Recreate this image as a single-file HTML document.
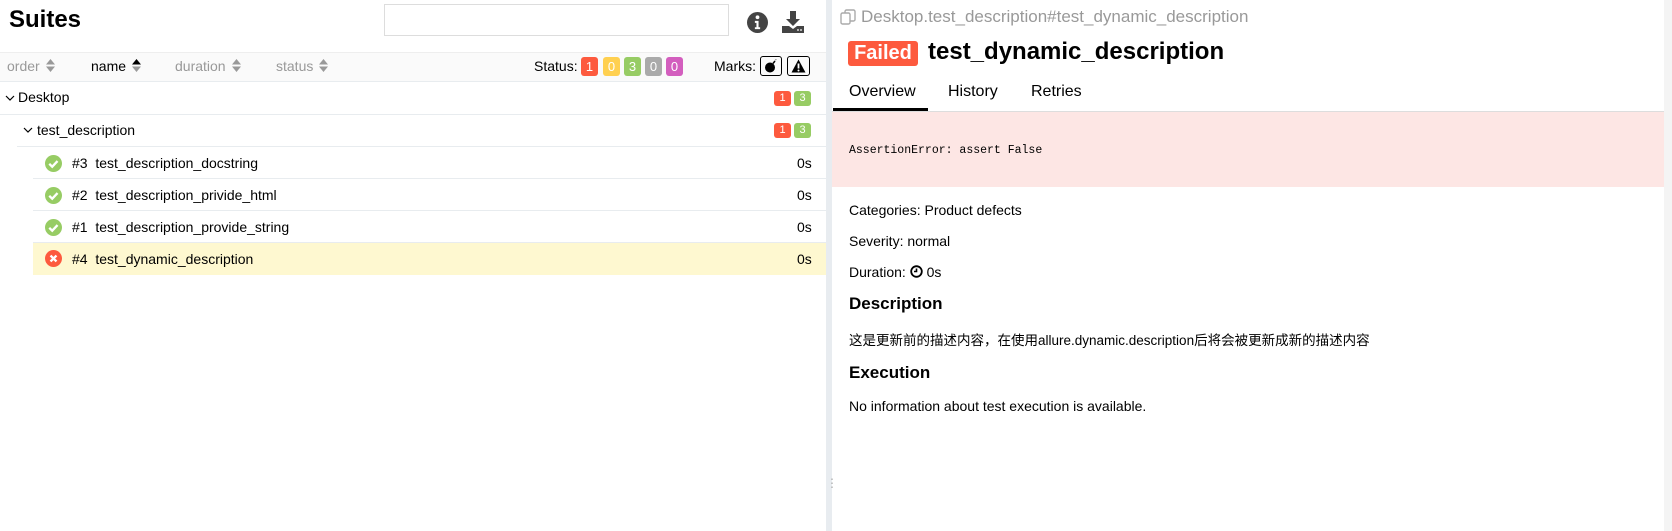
<!DOCTYPE html>
<html><head><meta charset="utf-8"><style>
*{box-sizing:border-box;margin:0;padding:0}
body{width:1672px;height:531px;overflow:hidden;background:#fff;font-family:"Liberation Sans","Noto Sans CJK SC",sans-serif;color:#000;position:relative;font-size:14px}
.a{position:absolute;white-space:nowrap}
.b{position:absolute;color:#fff;text-align:center;border-radius:3px;font-size:13px}
.row{position:absolute;left:0;width:826px;border-bottom:1px solid #e8ecef}
.s{display:inline-block;vertical-align:-1px;margin-left:6px}
</style></head><body>
<div class="a" style="left:9px;top:6px;font-size:24px;font-weight:bold">Suites</div>
<div class="a" style="left:384px;top:4px;width:345px;height:32px;border:1px solid #ddd"></div>
<svg class="a" style="left:747px;top:12px" width="21" height="21" viewBox="0 0 20 20"><circle cx="10" cy="10" r="10" fill="#444"/><circle cx="10" cy="5" r="1.8" fill="#fff"/><path d="M7.5 8.5h3.5v6h1.5v1.8h-5v-1.8h1.5v-4.2h-1.5z" fill="#fff"/></svg>
<svg class="a" style="left:782px;top:11px" width="22" height="22" viewBox="0 0 22 22"><path d="M8 0h6v8h4l-7 7-7-7h4z" fill="#444"/><path d="M0 15h7l4 3 4-3h7v7H0z" fill="#444"/><circle cx="16" cy="19" r=".9" fill="#fff"/><circle cx="19" cy="19" r=".9" fill="#fff"/></svg>
<div class="a" style="left:0;top:52px;width:826px;height:30px;background:#fafafa;border-top:1px solid #eee;border-bottom:1px solid #e8ecef"></div>
<div class="a" style="left:7px;top:58px;color:#999">order<svg class="s" width="9" height="13" viewBox="0 0 9 13"><path d="M0 5.5L4.5 0 9 5.5z" fill="#999"/><path d="M0 7.5L4.5 13 9 7.5z" fill="#999"/></svg></div>
<div class="a" style="left:91px;top:58px">name<svg class="s" width="9" height="13" viewBox="0 0 9 13"><path d="M0 5.5L4.5 0 9 5.5z" fill="#000"/><path d="M0 7.5L4.5 13 9 7.5z" fill="#999"/></svg></div>
<div class="a" style="left:175px;top:58px;color:#999">duration<svg class="s" width="9" height="13" viewBox="0 0 9 13"><path d="M0 5.5L4.5 0 9 5.5z" fill="#999"/><path d="M0 7.5L4.5 13 9 7.5z" fill="#999"/></svg></div>
<div class="a" style="left:276px;top:58px;color:#999">status<svg class="s" width="9" height="13" viewBox="0 0 9 13"><path d="M0 5.5L4.5 0 9 5.5z" fill="#999"/><path d="M0 7.5L4.5 13 9 7.5z" fill="#999"/></svg></div>
<div class="a" style="left:534px;top:58px">Status:</div>
<div class="b" style="left:581px;top:57px;width:17px;height:19px;line-height:19px;background:#fd5a3e">1</div>
<div class="b" style="left:603px;top:57px;width:17px;height:19px;line-height:19px;background:#ffd050">0</div>
<div class="b" style="left:624px;top:57px;width:17px;height:19px;line-height:19px;background:#97cc64">3</div>
<div class="b" style="left:645px;top:57px;width:17px;height:19px;line-height:19px;background:#aaa">0</div>
<div class="b" style="left:666px;top:57px;width:17px;height:19px;line-height:19px;background:#d35ebe">0</div>
<div class="a" style="left:714px;top:58px">Marks:</div>
<div class="a" style="left:760px;top:56px;width:22px;height:20px;border:1.5px solid #000;border-radius:3px"><svg style="position:absolute;left:3px;top:2px" width="14" height="14" viewBox="0 0 14 14"><circle cx="6" cy="8.5" r="5" fill="#000"/><path d="M9 4.5l2-2.5" stroke="#000" stroke-width="1.5"/><path d="M11 1l1.5-.5" stroke="#888" stroke-width="1"/></svg></div>
<div class="a" style="left:787px;top:56px;width:23px;height:20px;border:1.5px solid #000;border-radius:3px"><svg style="position:absolute;left:3px;top:2px" width="15" height="14" viewBox="0 0 15 14"><path d="M7.5 0.5L14.5 13.5H0.5z" fill="#000"/><path d="M7.5 4.5v5" stroke="#fff" stroke-width="1.8"/><circle cx="7.5" cy="11.5" r="1" fill="#fff"/></svg></div>
<div class="row" style="top:82px;height:33px"></div>
<svg class="a" style="left:5px;top:95px" width="10" height="7" viewBox="0 0 10 7"><path d="M1 1l4 4 4-4" stroke="#000" stroke-width="1.2" fill="none"/></svg><div class="a" style="left:18px;top:89px">Desktop</div>
<div class="b" style="left:774px;top:91px;width:17px;height:15px;line-height:15px;background:#fd5a3e;font-size:11px">1</div>
<div class="b" style="left:794px;top:91px;width:17px;height:15px;line-height:15px;background:#97cc64;font-size:11px">3</div>
<div class="row" style="top:115px;left:17px;width:809px;height:32px"></div>
<svg class="a" style="left:23px;top:127px" width="10" height="7" viewBox="0 0 10 7"><path d="M1 1l4 4 4-4" stroke="#000" stroke-width="1.2" fill="none"/></svg><div class="a" style="left:37px;top:122px">test_description</div>
<div class="b" style="left:774px;top:123px;width:17px;height:15px;line-height:15px;background:#fd5a3e;font-size:11px">1</div>
<div class="b" style="left:794px;top:123px;width:17px;height:15px;line-height:15px;background:#97cc64;font-size:11px">3</div>
<div class="row" style="top:147px;left:33px;width:793px;height:32px"></div>
<div class="row" style="top:179px;left:33px;width:793px;height:32px"></div>
<div class="row" style="top:211px;left:33px;width:793px;height:32px"></div>
<div class="row" style="top:243px;left:33px;width:793px;height:32px;background:#fef8d0;border:none"></div>
<svg class="a" style="left:45px;top:155px" width="17" height="17" viewBox="0 0 16 16"><circle cx="8" cy="8" r="8" fill="#97cc64"/><path d="M4 8.3l2.8 2.7 5-5.3" stroke="#fff" stroke-width="2.2" fill="none"/></svg>
<svg class="a" style="left:45px;top:187px" width="17" height="17" viewBox="0 0 16 16"><circle cx="8" cy="8" r="8" fill="#97cc64"/><path d="M4 8.3l2.8 2.7 5-5.3" stroke="#fff" stroke-width="2.2" fill="none"/></svg>
<svg class="a" style="left:45px;top:219px" width="17" height="17" viewBox="0 0 16 16"><circle cx="8" cy="8" r="8" fill="#97cc64"/><path d="M4 8.3l2.8 2.7 5-5.3" stroke="#fff" stroke-width="2.2" fill="none"/></svg>
<svg class="a" style="left:45px;top:250px" width="17" height="17" viewBox="0 0 16 16"><circle cx="8" cy="8" r="8" fill="#fd5a3e"/><path d="M5.2 5.2l5.6 5.6M10.8 5.2l-5.6 5.6" stroke="#fff" stroke-width="2.2"/></svg>
<div class="a" style="left:72px;top:155px">#3&nbsp;&nbsp;test_description_docstring</div>
<div class="a" style="left:72px;top:187px">#2&nbsp;&nbsp;test_description_privide_html</div>
<div class="a" style="left:72px;top:219px">#1&nbsp;&nbsp;test_description_provide_string</div>
<div class="a" style="left:72px;top:251px">#4&nbsp;&nbsp;test_dynamic_description</div>
<div class="a" style="left:797px;top:155px">0s</div><div class="a" style="left:797px;top:187px">0s</div><div class="a" style="left:797px;top:219px">0s</div><div class="a" style="left:797px;top:251px">0s</div>
<div class="a" style="left:826px;top:0;width:6px;height:531px;background:#e8ecf0"></div>
<div class="a" style="left:826px;top:476px;width:6px;color:#aaa;font-size:12px;text-align:center">&#8942;</div>
<div class="a" style="left:1664px;top:0;width:8px;height:531px;background:#f4f4f4"></div>
<svg class="a" style="left:840px;top:9px" width="17" height="17" viewBox="0 0 17 17" fill="none" stroke="#aaa" stroke-width="1.4"><rect x="1" y="4" width="9" height="11" rx="1.5"/><path d="M5 4V2.5A1.5 1.5 0 0 1 6.5 1h7A1.5 1.5 0 0 1 15 2.5v8a1.5 1.5 0 0 1-1.5 1.5H10"/></svg>
<div class="a" style="left:861px;top:7px;font-size:17px;color:#999">Desktop.test_description#test_dynamic_description</div>
<div class="a" style="left:848px;top:41px;width:70px;height:25px;background:#fd5a3e;border-radius:3px;color:#fff;font-size:20px;font-weight:bold;text-align:center;line-height:25px">Failed</div>
<div class="a" style="left:928px;top:38px;font-size:24px;font-weight:bold">test_dynamic_description</div>
<div class="a" style="left:849px;top:83px;font-size:16px">Overview</div>
<div class="a" style="left:948px;top:83px;font-size:16px">History</div>
<div class="a" style="left:1031px;top:83px;font-size:16px">Retries</div>
<div class="a" style="left:832px;top:111px;width:832px;height:1px;background:#ddd"></div>
<div class="a" style="left:833px;top:108px;width:95px;height:3px;background:#000"></div>
<div class="a" style="left:832px;top:112px;width:832px;height:75px;background:#fde6e4"></div>
<div class="a" style="left:849px;top:144px;font-family:'Liberation Mono',monospace;font-size:11.5px">AssertionError: assert False</div>
<div class="a" style="left:849px;top:202px">Categories: Product defects</div>
<div class="a" style="left:849px;top:233px">Severity: normal</div>
<div class="a" style="left:849px;top:264px">Duration: <svg width="13" height="13" viewBox="0 0 13 13" style="vertical-align:-1px"><circle cx="6.5" cy="6.5" r="5.3" fill="none" stroke="#000" stroke-width="1.8"/><path d="M6.5 3.5v3h-2.5" stroke="#000" stroke-width="1.6" fill="none"/></svg> 0s</div>
<div class="a" style="left:849px;top:294px;font-size:17px;font-weight:bold">Description</div>
<div class="a" style="left:849px;top:329px;font-size:13.5px">这是更新前的描述内容，在使用allure.dynamic.description后将会被更新成新的描述内容</div>
<div class="a" style="left:849px;top:363px;font-size:17px;font-weight:bold">Execution</div>
<div class="a" style="left:849px;top:398px">No information about test execution is available.</div>
</body></html>
